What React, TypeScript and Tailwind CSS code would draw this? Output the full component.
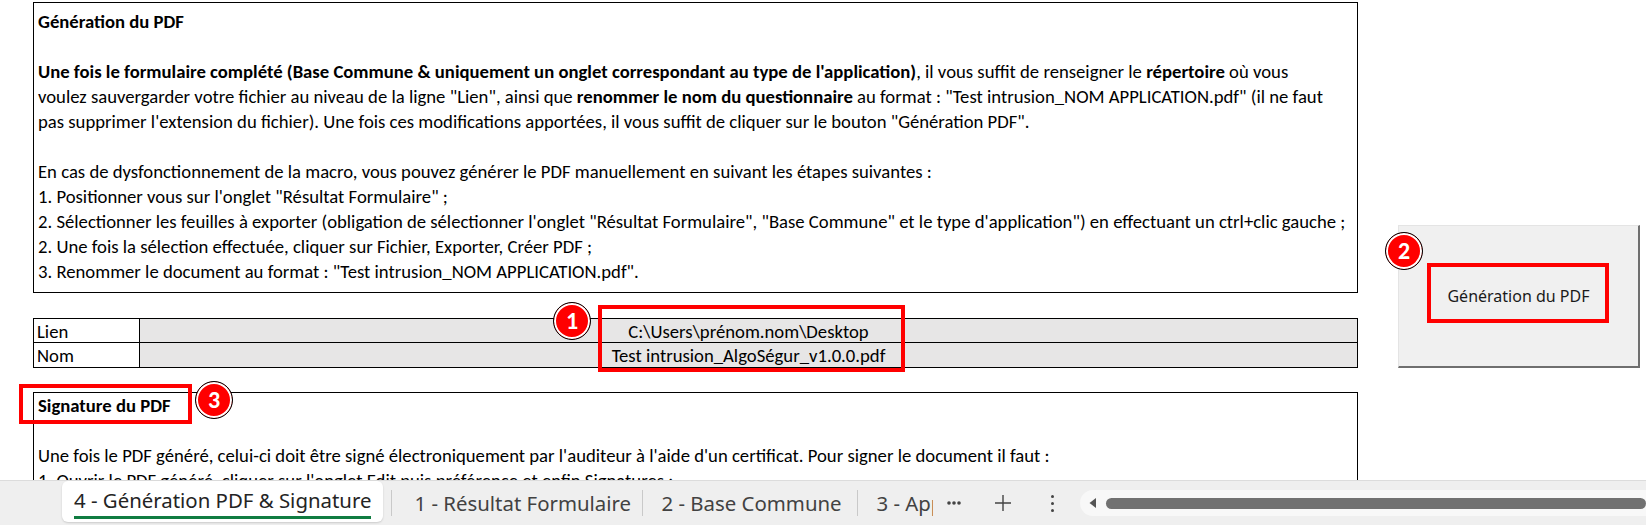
function Badge({ n, className }: { n: string; className: string }) {
  return (
    <div
      className={`absolute flex h-[38px] w-[38px] items-center justify-center rounded-full border border-black bg-[#ff0000] font-[Carlito,Calibri,Liberation_Sans,sans-serif] text-[24px] font-bold leading-none text-white shadow-[inset_0_0_0_2px_white] ${className}`}
    >
      {n}
    </div>
  );
}

function GenerationBox() {
  return (
    <div className="mt-[2px] border border-black px-[4px] pb-[8px] pt-[6px] whitespace-nowrap">
      <p className="font-bold">Génération du PDF</p>
      <p>&nbsp;</p>
      <p>
        <b>Une fois le formulaire complété (Base Commune &amp; uniquement un onglet correspondant au type de l'application)</b>, il vous suffit de renseigner le <b>répertoire</b> où vous
      </p>
      <p>
        voulez sauvergarder votre fichier au niveau de la ligne "Lien", ainsi que <b>renommer le nom du questionnaire</b> au format : "Test intrusion_NOM APPLICATION.pdf" (il ne faut
      </p>
      <p>pas supprimer l'extension du fichier). Une fois ces modifications apportées, il vous suffit de cliquer sur le bouton "Génération PDF".</p>
      <p>&nbsp;</p>
      <p>En cas de dysfonctionnement de la macro, vous pouvez générer le PDF manuellement en suivant les étapes suivantes :</p>
      <p>1. Positionner vous sur l'onglet "Résultat Formulaire" ;</p>
      <p>
        2. Sélectionner les feuilles à exporter (obligation de sélectionner l'onglet "Résultat Formulaire", "Base Commune" et le type d'application") en effectuant un ctrl+clic gauche ;
      </p>
      <p>2. Une fois la sélection effectuée, cliquer sur Fichier, Exporter, Créer PDF ;</p>
      <p>3. Renommer le document au format : "Test intrusion_NOM APPLICATION.pdf".</p>
    </div>
  );
}

function LinkTable() {
  return (
    <div className="mt-[25px] border border-black">
      <div className="flex h-[24px] border-b border-black">
        <div className="w-[106px] border-r border-black pl-[3px]">Lien</div>
        <div className="flex-1 bg-[#e7e6e6] text-center">{'C:\\Users\\prénom.nom\\Desktop'}</div>
      </div>
      <div className="flex h-[24px]">
        <div className="w-[106px] border-r border-black pl-[3px]">Nom</div>
        <div className="flex-1 bg-[#e7e6e6] text-center">Test intrusion_AlgoSégur_v1.0.0.pdf</div>
      </div>
    </div>
  );
}

function SignatureBox() {
  return (
    <div className="mt-[24px] border-x border-t border-black px-[4px] whitespace-nowrap">
      <p className="font-bold">Signature du PDF</p>
      <p>&nbsp;</p>
      <p>Une fois le PDF généré, celui-ci doit être signé électroniquement par l'auditeur à l'aide d'un certificat. Pour signer le document il faut :</p>
      <p>1. Ouvrir le PDF généré, cliquer sur l'onglet Edit puis préférence et enfin Signatures :</p>
    </div>
  );
}

function GenerateButton() {
  return (
    <div className="relative ml-[40px] mt-[225px] flex h-[143px] w-[242px] items-center justify-center border-b-2 border-r-2 border-l border-t border-b-[#6f6f6f] border-r-[#6f6f6f] border-l-[#e4e4e4] border-t-[#e4e4e4] bg-[#f0f0f0] font-[Noto_Sans,sans-serif] text-[16px] text-[#1a1a1a]">
      Génération du PDF
      <div className="absolute left-[28px] top-[37px] h-[60px] w-[182px] border-[4px] border-[#ff0000]" />
      <Badge n="2" className="left-[-14px] top-[6px]" />
    </div>
  );
}

function Dots() {
  return (
    <svg width="16" height="6" viewBox="0 0 16 6" className="fill-[#444]">
      <circle cx="3" cy="3" r="1.8" />
      <circle cx="8" cy="3" r="1.8" />
      <circle cx="13" cy="3" r="1.8" />
    </svg>
  );
}

function SheetTabs() {
  return (
    <div className="flex h-[45px] items-center border-t border-[#dcdcdc] bg-[#efefef] font-[Noto_Sans,sans-serif] text-[20.4px] text-[#424242]">
      <div className="ml-[62px] flex h-[41px] flex-col self-start rounded-[6px] bg-white px-[12px] shadow-[0_1px_2px_rgba(0,0,0,0.15)]">
        <span className="mt-[6px] leading-[26px] whitespace-nowrap text-[#242424]">4 - Génération PDF &amp; Signature</span>
        <span className="mt-[3px] h-[3px] bg-[#107c41]" />
      </div>
      <span className="ml-[8px] h-[26px] w-px bg-[#c9c9c9]" />
      <div className="w-[250px] whitespace-nowrap pl-[22px]">1 - Résultat Formulaire</div>
      <span className="h-[26px] w-px bg-[#c9c9c9]" />
      <div className="w-[214px] whitespace-nowrap pl-[18px]">2 - Base Commune</div>
      <span className="h-[26px] w-px bg-[#c9c9c9]" />
      <div className="w-[75px] overflow-hidden whitespace-nowrap pl-[18px]">3 - Application</div>
      <div className="ml-[13px] flex w-[16px] justify-center">
        <Dots />
      </div>
      <div className="ml-[32px] flex w-[18px] justify-center">
        <svg width="18" height="18" viewBox="0 0 18 18" className="stroke-[#444]" strokeWidth="1.4">
          <path d="M9 1v16M1 9h16" />
        </svg>
      </div>
      <div className="ml-[37px] flex w-[6px] flex-col items-center gap-[4px]">
        <span className="h-[3px] w-[3px] rounded-full bg-[#444]" />
        <span className="h-[3px] w-[3px] rounded-full bg-[#444]" />
        <span className="h-[3px] w-[3px] rounded-full bg-[#444]" />
      </div>
      <div className="ml-[25px] flex h-[26px] flex-1 items-center rounded-l-full bg-[#f8f8f8] pl-[8px]">
        <svg width="9" height="12" viewBox="0 0 9 12" className="fill-[#555]">
          <path d="M8 1 L1.5 6 L8 11 Z" />
        </svg>
        <div className="ml-[9px] h-[11px] flex-1 rounded-full bg-[#717171]" />
      </div>
    </div>
  );
}

export default function App() {
  return (
    <div className="relative flex h-[525px] w-[1646px] flex-col overflow-hidden bg-white">
      <div className="h-[480px] overflow-hidden">
        <div className="flex items-start">
          <div className="relative ml-[33px] w-[1325px] shrink-0 font-[Carlito,Calibri,Liberation_Sans,sans-serif] text-[18.7px] leading-[25px] text-black">
            <GenerationBox />
            <LinkTable />
            <SignatureBox />
            <div className="absolute left-[565px] top-[305px] h-[67px] w-[307px] border-[4px] border-[#ff0000]" />
            <Badge n="1" className="left-[520px] top-[302px]" />
            <div className="absolute left-[-14px] top-[384px] h-[40px] w-[173px] border-[4px] border-[#ff0000]" />
            <Badge n="3" className="left-[162px] top-[381px]" />
          </div>
          <GenerateButton />
        </div>
      </div>
      <SheetTabs />
    </div>
  );
}
